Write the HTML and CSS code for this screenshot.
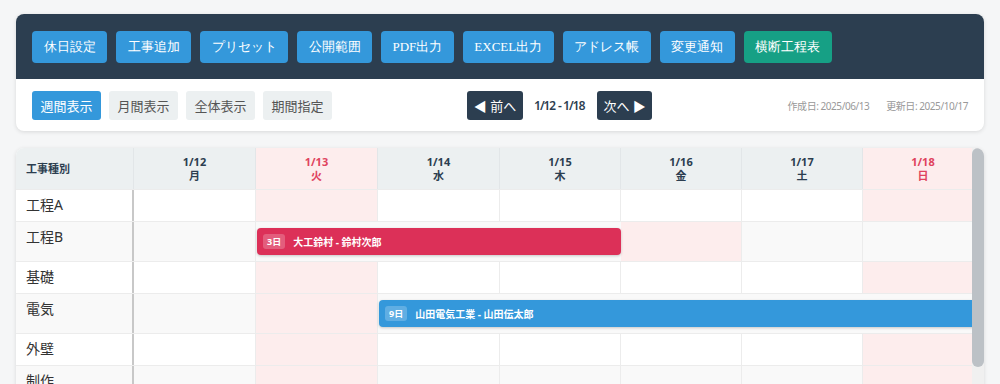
FILE: index.html
```html
<!DOCTYPE html>
<html lang="ja">
<head>
    <meta charset="UTF-8">
    <meta name="viewport" content="width=device-width, initial-scale=1.0">
    <title>工程表</title>
    <link rel="stylesheet" href="styles.css">
</head>
<body>
    <div class="panel">
        <div class="toolbar">
            <button class="tool-btn">休日設定</button>
            <button class="tool-btn">工事追加</button>
            <button class="tool-btn">プリセット</button>
            <button class="tool-btn">公開範囲</button>
            <button class="tool-btn">PDF出力</button>
            <button class="tool-btn">EXCEL出力</button>
            <button class="tool-btn">アドレス帳</button>
            <button class="tool-btn">変更通知</button>
            <button class="tool-btn green">横断工程表</button>
        </div>
        <div class="viewbar">
            <div class="view-modes">
                <button class="mode-btn active">週間表示</button>
                <button class="mode-btn">月間表示</button>
                <button class="mode-btn">全体表示</button>
                <button class="mode-btn">期間指定</button>
            </div>
            <div class="week-nav">
                <button class="nav-btn">◀ 前へ</button>
                <span class="range">1/12 - 1/18</span>
                <button class="nav-btn">次へ ▶</button>
            </div>
            <div class="dates">
                <span>作成日: 2025/06/13</span>
                <span>更新日: 2025/10/17</span>
            </div>
        </div>
    </div>

    <div class="schedule">
        <div class="row head">
            <div class="label">工事種別</div>
            <div class="day">1/12<br>月</div>
            <div class="day holiday">1/13<br>火</div>
            <div class="day">1/14<br>水</div>
            <div class="day">1/15<br>木</div>
            <div class="day">1/16<br>金</div>
            <div class="day">1/17<br>土</div>
            <div class="day holiday">1/18<br>日</div>
        </div>
        <div class="row">
            <div class="label">工程A</div>
            <div class="cell"></div><div class="cell holiday"></div><div class="cell"></div><div class="cell"></div><div class="cell"></div><div class="cell"></div><div class="cell holiday"></div>
        </div>
        <div class="row alt">
            <div class="label">工程B</div>
            <div class="cell"></div><div class="cell holiday"></div><div class="cell"></div><div class="cell"></div><div class="cell"></div><div class="cell"></div><div class="cell holiday"></div>
            <div class="bar red" style="grid-column: 3 / 6;"><span class="days">3日</span>大工鈴村 - 鈴村次郎</div>
        </div>
        <div class="row">
            <div class="label">基礎</div>
            <div class="cell"></div><div class="cell holiday"></div><div class="cell"></div><div class="cell"></div><div class="cell"></div><div class="cell"></div><div class="cell holiday"></div>
        </div>
        <div class="row alt">
            <div class="label">電気</div>
            <div class="cell"></div><div class="cell holiday"></div><div class="cell"></div><div class="cell"></div><div class="cell"></div><div class="cell"></div><div class="cell holiday"></div>
            <div class="bar blue" style="grid-column: 4 / 9;"><span class="days">9日</span>山田電気工業 - 山田伝太郎</div>
        </div>
        <div class="row">
            <div class="label">外壁</div>
            <div class="cell"></div><div class="cell holiday"></div><div class="cell"></div><div class="cell"></div><div class="cell"></div><div class="cell"></div><div class="cell holiday"></div>
        </div>
        <div class="row alt">
            <div class="label">制作</div>
            <div class="cell"></div><div class="cell holiday"></div><div class="cell"></div><div class="cell"></div><div class="cell"></div><div class="cell"></div><div class="cell holiday"></div>
        </div>
        <div class="scrollbar"><div class="thumb"></div></div>
    </div>
</body>
</html>
```

FILE: styles.css
```css
body {
    font-family: "Noto Sans", "Noto Sans CJK JP", sans-serif;
    background-color: #f5f6f7;
    margin: 0;
    padding: 14px 16px;
    color: #333;
}
button {
    border: none;
    cursor: pointer;
}
.panel {
    background-color: white;
    border-radius: 8px;
    box-shadow: 0 1px 4px rgba(0, 0, 0, 0.12);
    overflow: hidden;
}
.toolbar {
    background-color: #2c3e50;
    display: flex;
    gap: 9px;
    padding: 17px 16px 16px;
}
.tool-btn {
    font-family: "Liberation Serif", serif;
    font-size: 13px;
    height: 32px;
    padding: 0 11.5px;
    border-radius: 4px;
    background-color: #3498db;
    color: white;
}
.tool-btn.green {
    background-color: #16a085;
}
.viewbar {
    display: flex;
    justify-content: space-between;
    align-items: center;
    padding: 12px 16px 11px;
}
.view-modes {
    display: flex;
    gap: 8px;
}
.mode-btn {
    font-family: inherit;
    font-size: 13px;
    height: 29px;
    padding: 0 8.5px;
    border-radius: 3px;
    background-color: #ecf0f1;
    color: #555;
}
.mode-btn.active {
    background-color: #3498db;
    color: white;
}
.week-nav {
    display: flex;
    align-items: center;
    gap: 12px;
}
.nav-btn {
    font-family: inherit;
    font-size: 13px;
    height: 29px;
    padding: 0 6.5px;
    border-radius: 3px;
    background-color: #2c3e50;
    color: white;
}
.range {
    font-size: 12px;
    font-weight: 600;
    font-variant-numeric: proportional-nums;
    letter-spacing: -0.6px;
    color: #2c3e50;
}
.dates {
    display: flex;
    gap: 17px;
    font-size: 10px;
    letter-spacing: -0.45px;
    color: #999;
}
.schedule {
    position: relative;
    margin-top: 17px;
    background-color: white;
    border-radius: 8px;
    box-shadow: 0 1px 4px rgba(0, 0, 0, 0.12);
    overflow: hidden;
}
.row {
    display: grid;
    grid-template-columns: 118px 122px 122px 122px 121px 121px 121px 1fr;
    min-height: 31px;
    border-bottom: 1px solid #ececec;
}
.row.alt {
    background-color: #f9f9f9;
}
.row > .label,
.row > .cell,
.row > .day {
    grid-row: 1;
}
.label {
    padding: 6px 10px 7px;
    font-size: 14px;
    line-height: 18px;
    color: #333;
    border-right: 2px solid #c8c8c8;
}
.cell {
    border-right: 1px solid #ececec;
}
.cell.holiday {
    background-color: #fdeded;
}
.row.head {
    background-color: #ecf0f1;
    min-height: 40px;
}
.row.head .label {
    font-size: 11px;
    font-weight: bold;
    color: #2c3e50;
    border-right: 1px solid #e2e6e8;
    display: flex;
    align-items: center;
    padding: 0 10px;
}
.day {
    font-size: 11px;
    font-weight: bold;
    line-height: 14px;
    color: #2c3e50;
    text-align: center;
    padding: 7px 0 6px;
    border-right: 1px solid #e2e6e8;
}
.day.holiday {
    background-color: #fdeded;
    color: #e0435e;
}
.bar {
    grid-row: 1;
    align-self: start;
    height: 27px;
    margin: 6px 0 6px 1px;
    padding: 0 6px;
    border-radius: 4px;
    display: flex;
    align-items: center;
    gap: 8px;
    color: white;
    font-size: 10px;
    font-weight: bold;
    white-space: nowrap;
    overflow: hidden;
    box-shadow: 0 1px 3px rgba(0, 0, 0, 0.2);
}
.bar.red {
    background-color: #dc3058;
}
.bar.blue {
    background-color: #3498db;
    border-radius: 4px 0 0 4px;
}
.days {
    background-color: rgba(255, 255, 255, 0.22);
    padding: 1px 4px;
    border-radius: 3px;
    font-size: 9px;
}
.scrollbar {
    position: absolute;
    top: 0;
    right: 0;
    bottom: 0;
    width: 12px;
    background-color: #f0f0f0;
}
.thumb {
    height: 219px;
    border-radius: 6px;
    background-color: #bcc1c6;
}
```
